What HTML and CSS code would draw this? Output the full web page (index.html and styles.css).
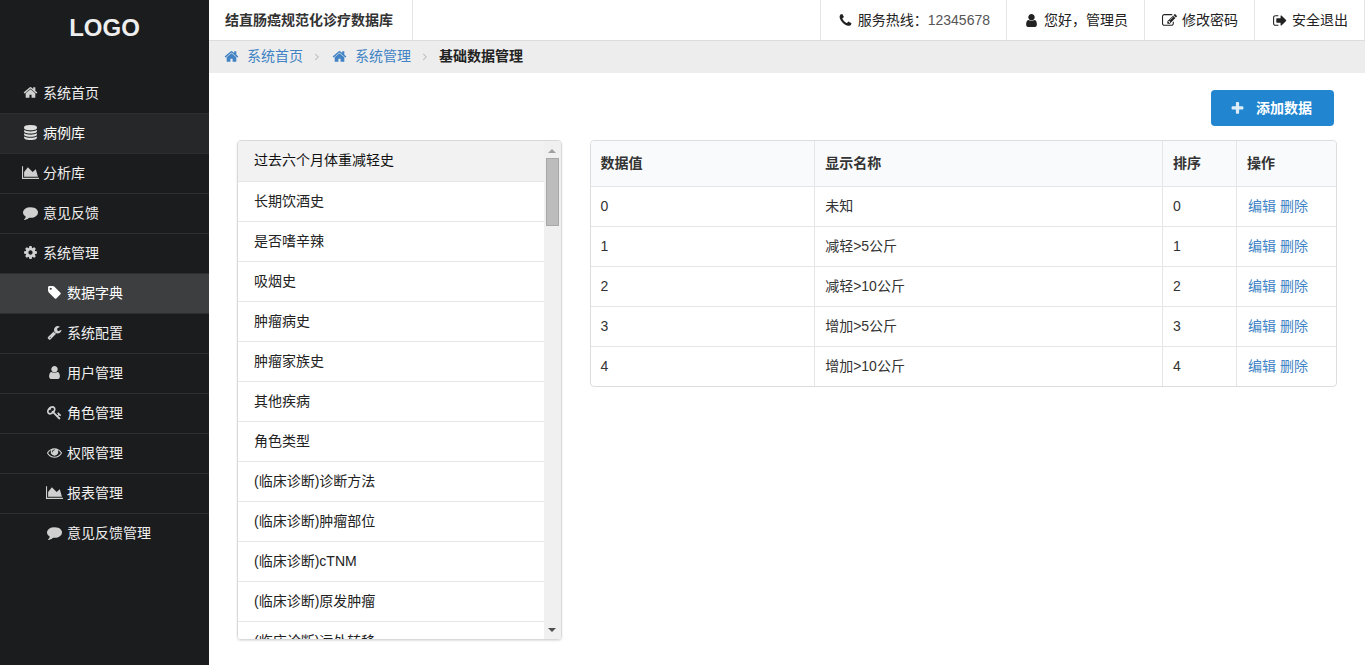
FILE: index.html
```html
<!DOCTYPE html>
<html lang="zh-CN">
<head>
<meta charset="utf-8">
<title>基础数据管理</title>
<link rel="stylesheet" href="styles.css">
</head>
<body>
<svg class="sprite" aria-hidden="true">
  <symbol id="home" viewBox="0 0 1792 1792"><path d="M1472 992v480q0 26-19 45t-45 19h-384v-384h-256v384h-384q-26 0-45-19t-19-45v-480q0-1 .5-3t.5-3l575-474 575 474q1 2 1 6zm223-69l-62 74q-8 9-21 11h-3q-13 0-21-7l-692-577-692 577q-12 8-24 7-13-2-21-11l-62-74q-8-10-7-23.5t11-21.5l719-599q32-26 76-26t76 26l244 204v-195q0-14 9-23t23-9h192q14 0 23 9t9 23v408l219 182q10 8 11 21.5t-7 23.5z"/></symbol>
  <symbol id="database" viewBox="0 0 1792 1792"><path d="M896 768q237 0 443-43t325-127v170q0 69-103 128t-280 93.5-385 34.5-385-34.5-280-93.5-103-128v-170q119 84 325 127t443 43zm0 768q237 0 443-43t325-127v170q0 69-103 128t-280 93.5-385 34.5-385-34.5-280-93.5-103-128v-170q119 84 325 127t443 43zm0-384q237 0 443-43t325-127v170q0 69-103 128t-280 93.5-385 34.5-385-34.5-280-93.5-103-128v-170q119 84 325 127t443 43zm0-1152q208 0 385 34.5t280 93.5 103 128v128q0 69-103 128t-280 93.5-385 34.5-385-34.5-280-93.5-103-128v-128q0-69 103-128t280-93.5 385-34.5z"/></symbol>
  <symbol id="chart" viewBox="0 0 2048 1792"><path d="M2048 1536v128h-2048v-1536h128v1408h1920zm-384-1024l256 896h-1664v-576l448-576 576 576z"/></symbol>
  <symbol id="comment" viewBox="0 0 1792 1792"><path d="M1792 896q0 174-120 321.5t-326 233-450 85.5q-70 0-145-8-198 175-460 242-49 14-114 22-17 2-30.5-9t-17.5-29v-1q-3-4-.5-12t2-10 4.5-9.5l6-9 7-8.5 8-9q7-8 31-34.5t34.5-38 31-39.5 32.5-51 27-59 26-76q-157-89-247.5-220t-90.5-281q0-130 71-248.5t191-204.5 286-136.5 348-50.5q244 0 450 85.5t326 233 120 321.5z"/></symbol>
  <symbol id="cog" viewBox="0 0 1792 1792"><path d="M1152 896q0-106-75-181t-181-75-181 75-75 181 75 181 181 75 181-75 75-181zm512-109v222q0 12-8 23t-20 13l-185 28q-19 54-39 91 35 50 107 138 10 12 10 25t-9 23q-27 37-99 108t-94 71q-12 0-26-9l-138-108q-44 23-91 38-16 136-29 186-7 28-36 28h-222q-14 0-24.5-8.5t-11.5-21.5l-28-184q-49-16-90-37l-141 107q-10 9-25 9-14 0-25-11-126-114-165-168-7-10-7-23 0-12 8-23 15-21 51-66.5t54-70.5q-27-50-41-99l-183-27q-13-2-21-12.5t-8-23.5v-222q0-12 8-23t19-13l186-28q14-46 39-92-40-57-107-138-10-12-10-24 0-10 9-23 26-36 98.5-107.5t94.5-71.5q13 0 26 10l138 107q44-23 91-38 16-136 29-186 7-28 36-28h222q14 0 24.5 8.5t11.5 21.5l28 184q49 16 90 37l142-107q9-9 24-9 13 0 25 10 129 119 165 170 7 8 7 22 0 12-8 23-15 21-51 66.5t-54 70.5q26 50 41 98l183 28q13 2 21 12.5t8 23.5z"/></symbol>
  <symbol id="tag" viewBox="0 0 1792 1792"><path d="M576 448q0-53-37.5-90.5t-90.5-37.5-90.5 37.5-37.5 90.5 37.5 90.5 90.5 37.5 90.5-37.5 37.5-90.5zm1067 576q0 53-37 90l-491 492q-39 37-91 37-53 0-90-37l-715-716q-38-37-64.5-101t-26.5-117v-416q0-52 38-90t90-38h416q53 0 117 26.5t102 64.5l715 714q37 39 37 91z"/></symbol>
  <symbol id="wrench" viewBox="0 0 1792 1792"><path d="M448 1472q0-26-19-45t-45-19-45 19-19 45 19 45 45 19 45-19 19-45zm644-420l-682 682q-37 37-90 37-52 0-91-37l-106-108q-38-36-38-90 0-53 38-91l681-681q39 98 114.5 173.5t173.5 114.5zm634-435q0 39-23 106-47 134-164.5 217.5t-258.5 83.5q-185 0-316.5-131.5t-131.5-316.5 131.5-316.5 316.5-131.5q58 0 121.5 16.5t107.5 46.5q16 11 16 28t-16 28l-293 169v224l193 107q5-3 79-48.5t135.5-81 70.5-35.5q15 0 23.5 10t8.5 25z"/></symbol>
  <symbol id="user" viewBox="0 0 1792 1792"><path d="M1536 1399q0 109-62.5 187t-150.5 78h-854q-88 0-150.5-78t-62.5-187q0-85 8.5-160.5t31.5-152 58.5-131 94-89 134.5-34.5q131 128 313 128t313-128q76 0 134.5 34.5t94 89 58.5 131 31.5 152 8.5 160.5zm-256-887q0 159-112.5 271.5t-271.5 112.5-271.5-112.5-112.5-271.5 112.5-271.5 271.5-112.5 271.5 112.5 112.5 271.5z"/></symbol>
  <symbol id="key" viewBox="0 0 1792 1792"><path d="M832 512q0-80-56-136t-136-56-136 56-56 136q0 42 19 83-41-19-83-19-80 0-136 56t-56 136 56 136 136 56 136-56 56-136q0-42-19-83 41 19 83 19 80 0 136-56t56-136zm851 704q0 17-49 66t-66 49q-9 0-28.5-16t-36.5-33-38.5-40-24.5-26l-96 96 220 220q28 28 28 68 0 42-39 81t-81 39q-40 0-68-28l-671-671q-176 131-365 131-163 0-265.5-102.5t-102.5-265.5q0-160 95-313t248-248 313-95q163 0 265.5 102.5t102.5 265.5q0 189-131 365l355 355 96-96q-3-3-26-24.5t-40-38.5-33-36.5-16-28.5q0-17 49-66t66-49q13 0 23 10 6 6 46 44.5t82 79.5 86.5 86 73 78 28.5 41z"/></symbol>
  <symbol id="eye" viewBox="0 0 1792 1792"><path d="M1664 960q-152-236-381-353 61 104 61 225 0 185-131.5 316.5t-316.5 131.5-316.5-131.5-131.5-316.5q0-121 61-225-229 117-381 353 133 205 333.5 326.5t434.5 121.5 434.5-121.5 333.5-326.5zm-720-384q0-20-14-34t-34-14q-125 0-214.5 89.5t-89.5 214.5q0 20 14 34t34 14 34-14 14-34q0-86 61-147t147-61q20 0 34-14t14-34zm848 384q0 34-20 69-140 230-376.5 368.5t-499.5 138.5-499.5-139-376.5-368q-20-35-20-69t20-69q140-229 376.5-368t499.5-139 499.5 139 376.5 368q20 35 20 69z"/></symbol>
  <symbol id="phone" viewBox="0 0 1792 1792"><path d="M1600 1240q0 27-10 70.5t-21 68.5q-21 50-122 106-94 51-186 51-27 0-53-3.5t-57.5-12.5-47-14.5-55.5-20.5-49-18q-98-35-175-83-127-79-264-216t-216-264q-48-77-83-175-3-9-18-49t-20.5-55.5-14.5-47-12.5-57.5-3.5-53q0-92 51-186 56-101 106-122 25-11 68.5-21t70.5-10q14 0 21 3 18 6 53 76 11 19 30 54t35 63.5 31 53.5q3 4 17.5 25t21.5 35.5 7 28.5q0 20-28.5 50t-62 55-62 53-28.5 46q0 9 5 22.5t8.5 20.5 14 24 11.5 19q76 137 174 235t235 174q2 1 19 11.5t24 14 20.5 8.5 22.5 5q18 0 46-28.5t53-62 55-62 50-28.5q14 0 28.5 7t35.5 21.5 25 17.5q25 15 53.5 31t63.5 35 54 30q70 35 76 53 3 7 3 21z"/></symbol>
  <symbol id="edit" viewBox="0 0 1792 1792"><path d="M888 1184l116-116-152-152-116 116v56h96v96h56zm440-720q-16-16-33 1l-350 350q-17 17-1 33t33-1l350-350q17-17 1-33zm80 594v190q0 119-84.5 203.5t-203.5 84.5h-832q-119 0-203.5-84.5t-84.5-203.5v-832q0-119 84.5-203.5t203.5-84.5h832q63 0 117 25 15 7 18 23 3 17-9 29l-49 49q-14 14-32 8-23-6-45-6h-832q-66 0-113 47t-47 113v832q0 66 47 113t113 47h832q66 0 113-47t47-113v-126q0-13 9-22l64-64q15-15 35-7t20 29zm-96-738l288 288-672 672h-288v-288zm444 132l-92 92-288-288 92-92q28-28 68-28t68 28l152 152q28 28 28 68t-28 68z"/></symbol>
  <symbol id="signout" viewBox="0 0 1664 1792"><path d="M704 1440q0 4 1 20t.5 26.5-3 23.5-10 19.5-20.5 6.5h-320q-119 0-203.5-84.5t-84.5-203.5v-704q0-119 84.5-203.5t203.5-84.5h320q13 0 22.5 9.5t9.5 22.5q0 4 1 20t.5 26.5-3 23.5-10 19.5-20.5 6.5h-320q-66 0-113 47t-47 113v704q0 66 47 113t113 47h312l11.5 1 11.5 3 8 5.5 7 9 2 13.5zm928-544q0 26-19 45l-544 544q-19 19-45 19t-45-19-19-45v-288h-448q-26 0-45-19t-19-45v-384q0-26 19-45t45-19h448v-288q0-26 19-45t45-19 45 19l544 544q19 19 19 45z"/></symbol>
  <symbol id="plus" viewBox="0 0 1792 1792"><path d="M1600 736v192q0 40-28 68t-68 28h-416v416q0 40-28 68t-68 28h-192q-40 0-68-28t-28-68v-416h-416q-40 0-68-28t-28-68v-192q0-40 28-68t68-28h416v-416q0-40 28-68t68-28h192q40 0 68 28t28 68v416h416q40 0 68 28t28 68z"/></symbol>
  <symbol id="angle" viewBox="0 0 1792 1792"><path d="M1171 960q0 13-10 23l-466 466q-10 10-23 10t-23-10l-50-50q-10-10-10-23t10-23l393-393-393-393q-10-10-10-23t10-23l50-50q10-10 23-10t23 10l466 466q10 10 10 23z"/></symbol>
</svg>
<div class="app">
  <aside class="sidebar">
    <div class="logo">LOGO</div>
    <nav class="menu">
      <a href="#" class="menu-item"><svg class="icon"><use href="#home"/></svg>系统首页</a>
      <a href="#" class="menu-item hovered"><svg class="icon"><use href="#database"/></svg>病例库</a>
      <a href="#" class="menu-item"><svg class="icon"><use href="#chart"/></svg>分析库</a>
      <a href="#" class="menu-item"><svg class="icon"><use href="#comment"/></svg>意见反馈</a>
      <a href="#" class="menu-item"><svg class="icon"><use href="#cog"/></svg>系统管理</a>
      <a href="#" class="menu-item sub active"><svg class="icon"><use href="#tag"/></svg>数据字典</a>
      <a href="#" class="menu-item sub"><svg class="icon"><use href="#wrench"/></svg>系统配置</a>
      <a href="#" class="menu-item sub"><svg class="icon"><use href="#user"/></svg>用户管理</a>
      <a href="#" class="menu-item sub"><svg class="icon"><use href="#key"/></svg>角色管理</a>
      <a href="#" class="menu-item sub"><svg class="icon"><use href="#eye"/></svg>权限管理</a>
      <a href="#" class="menu-item sub"><svg class="icon"><use href="#chart"/></svg>报表管理</a>
      <a href="#" class="menu-item sub"><svg class="icon"><use href="#comment"/></svg>意见反馈管理</a>
    </nav>
  </aside>
  <div class="page">
    <header class="topbar">
      <div class="brand">结直肠癌规范化诊疗数据库</div>
      <div class="tools">
        <div class="tool"><svg class="icon"><use href="#phone"/></svg><span>服务热线：<span class="number">12345678</span></span></div>
        <a href="#" class="tool"><svg class="icon"><use href="#user"/></svg>您好，管理员</a>
        <a href="#" class="tool"><svg class="icon"><use href="#edit"/></svg>修改密码</a>
        <a href="#" class="tool"><svg class="icon"><use href="#signout"/></svg>安全退出</a>
      </div>
    </header>
    <nav class="crumbs">
      <a href="#" class="crumb"><svg class="icon"><use href="#home"/></svg>系统首页</a>
      <svg class="icon divider"><use href="#angle"/></svg>
      <a href="#" class="crumb"><svg class="icon"><use href="#home"/></svg>系统管理</a>
      <svg class="icon divider"><use href="#angle"/></svg>
      <strong>基础数据管理</strong>
    </nav>
    <main>
      <div class="actions">
        <button type="button" class="add"><svg class="icon"><use href="#plus"/></svg>添加数据</button>
      </div>
      <div class="columns">
        <div class="column">
          <div class="list-box">
            <div class="list">
              <button type="button" class="entry selected">过去六个月体重减轻史</button>
              <button type="button" class="entry">长期饮酒史</button>
              <button type="button" class="entry">是否嗜辛辣</button>
              <button type="button" class="entry">吸烟史</button>
              <button type="button" class="entry">肿瘤病史</button>
              <button type="button" class="entry">肿瘤家族史</button>
              <button type="button" class="entry">其他疾病</button>
              <button type="button" class="entry">角色类型</button>
              <button type="button" class="entry">(临床诊断)诊断方法</button>
              <button type="button" class="entry">(临床诊断)肿瘤部位</button>
              <button type="button" class="entry">(临床诊断)cTNM</button>
              <button type="button" class="entry">(临床诊断)原发肿瘤</button>
              <button type="button" class="entry">(临床诊断)远处转移</button>
            </div>
            <div class="scrollbar" aria-hidden="true">
              <span class="arrow up"></span>
              <span class="thumb"></span>
              <span class="arrow down"></span>
            </div>
          </div>
        </div>
        <div class="column">
          <table class="data">
            <thead>
              <tr><th class="c-value">数据值</th><th>显示名称</th><th class="c-order">排序</th><th class="c-ops">操作</th></tr>
            </thead>
            <tbody>
              <tr><td>0</td><td>未知</td><td>0</td><td class="ops"><a href="#">编辑</a> <a href="#">删除</a></td></tr>
              <tr><td>1</td><td>减轻&gt;5公斤</td><td>1</td><td class="ops"><a href="#">编辑</a> <a href="#">删除</a></td></tr>
              <tr><td>2</td><td>减轻&gt;10公斤</td><td>2</td><td class="ops"><a href="#">编辑</a> <a href="#">删除</a></td></tr>
              <tr><td>3</td><td>增加&gt;5公斤</td><td>3</td><td class="ops"><a href="#">编辑</a> <a href="#">删除</a></td></tr>
              <tr><td>4</td><td>增加&gt;10公斤</td><td>4</td><td class="ops"><a href="#">编辑</a> <a href="#">删除</a></td></tr>
            </tbody>
          </table>
        </div>
      </div>
    </main>
  </div>
</div>
</body>
</html>
```
FILE: styles.css
```css
* { box-sizing: border-box; }

body {
  margin: 0;
  background: #fff;
  color: #333;
  font: 14px/20px "Liberation Sans", "Noto Sans CJK SC", sans-serif;
}

a { color: #4183c4; text-decoration: none; }
button { font: inherit; cursor: pointer; }

.sprite { display: none; }

.icon {
  flex: none;
  width: 17px;
  height: 15px;
  fill: currentColor;
}

.app { display: flex; min-height: 100vh; }

/* Sidebar */
.sidebar {
  flex: none;
  width: 209px;
  background: #1b1c1d;
}

.logo {
  padding: 14px 0 16px;
  color: #eee;
  font-size: 24px;
  font-weight: bold;
  line-height: 28px;
  text-align: center;
}

.menu { padding-top: 16px; }

.menu-item {
  display: flex;
  align-items: center;
  gap: 4px;
  height: 40px;
  padding: 0 16px 2px 22px;
  border-bottom: 1px solid #2d2e2f;
  color: #f0f0f0;
}

.menu-item:last-child { border-bottom-color: transparent; }
.menu-item .icon { opacity: .85; }
.menu-item.sub { padding-left: 46px; }
.menu-item.hovered { background: #262728; color: #fff; }
.menu-item.active { background: #3d3e3f; color: #fff; }
.menu-item.active .icon { opacity: 1; }

/* Header */
.page { flex: 1; min-width: 0; }

.topbar {
  display: flex;
  justify-content: space-between;
  height: 41px;
  border-bottom: 1px solid #dcdcdc;
}

.brand {
  padding: 10px 19px 10px 16px;
  border-right: 1px solid #e5e5e5;
  font-weight: bold;
}

.tools { display: flex; border-left: 1px solid #e5e5e5; }

.tool {
  display: flex;
  align-items: center;
  gap: 4px;
  padding: 0 16px;
  border-right: 1px solid #e5e5e5;
  color: #222;
}

.number { color: #555; }

.crumbs {
  display: flex;
  align-items: center;
  gap: 8px;
  height: 32px;
  padding: 0 14px 2px;
  background: #ededed;
}

.crumb { display: flex; align-items: center; gap: 7px; }
.crumbs strong { color: #222; }
.divider { width: 12px; color: #b8b8b8; }

/* Content */
.actions {
  display: flex;
  justify-content: flex-end;
  padding: 17px 31px 14px;
}

.add {
  display: flex;
  align-items: center;
  gap: 10px;
  height: 36px;
  padding: 0 22px 0 18px;
  border: 0;
  border-radius: 4px;
  background: #2185d0;
  color: #fff;
  font-weight: bold;
}

.add .icon { opacity: .85; }

.columns {
  display: grid;
  grid-template-columns: 5fr 11fr;
  padding: 0 14px 24px;
}

.column { min-width: 0; padding: 0 14px; }

.list-box {
  display: flex;
  height: 500px;
  overflow: hidden;
  border: 1px solid #d8d9da;
  border-radius: 4px;
  box-shadow: 0 1px 2px rgba(0, 0, 0, .12);
}

.list { flex: 1; overflow: auto; scrollbar-width: none; }

.entry {
  display: block;
  width: 100%;
  height: 40px;
  padding: 0 16px 2px;
  border: 0;
  border-bottom: 1px solid #e6e6e6;
  background: #fff;
  color: #222;
  text-align: left;
}

.entry.selected { height: 41px; background: #f2f2f2; color: #111; }

.scrollbar {
  display: flex;
  flex-direction: column;
  align-items: center;
  width: 17px;
  padding: 8px 0 7px;
  background: #f0f0f0;
}

.arrow { border: 4px solid transparent; }
.arrow.up { border-top: 0; border-bottom-color: #a0a0a0; }
.arrow.down { margin-top: auto; border-bottom: 0; border-top-color: #505050; }

.thumb {
  width: 13px;
  height: 68px;
  margin-top: 5px;
  border: 1px solid #a8a8a8;
  background: #bcbcbc;
}

.data {
  width: 100%;
  border: 1px solid #dcddde;
  border-radius: 4px;
  border-spacing: 0;
  table-layout: fixed;
}

.data th,
.data td {
  height: 40px;
  padding: 0 10px 2px;
  border-top: 1px solid #e5e6e7;
  border-left: 1px solid #e5e6e7;
  text-align: left;
}

.data th {
  height: 45px;
  border-top: 0;
  background: #f9fafb;
}

.data th:first-child,
.data td:first-child { border-left: 0; }
.data th:first-child { border-top-left-radius: 4px; }
.data th:last-child { border-top-right-radius: 4px; }
.c-value { width: 30%; }
.c-order { width: 74px; }
.c-ops { width: 100px; }
.data .ops { padding-left: 11px; }
```
